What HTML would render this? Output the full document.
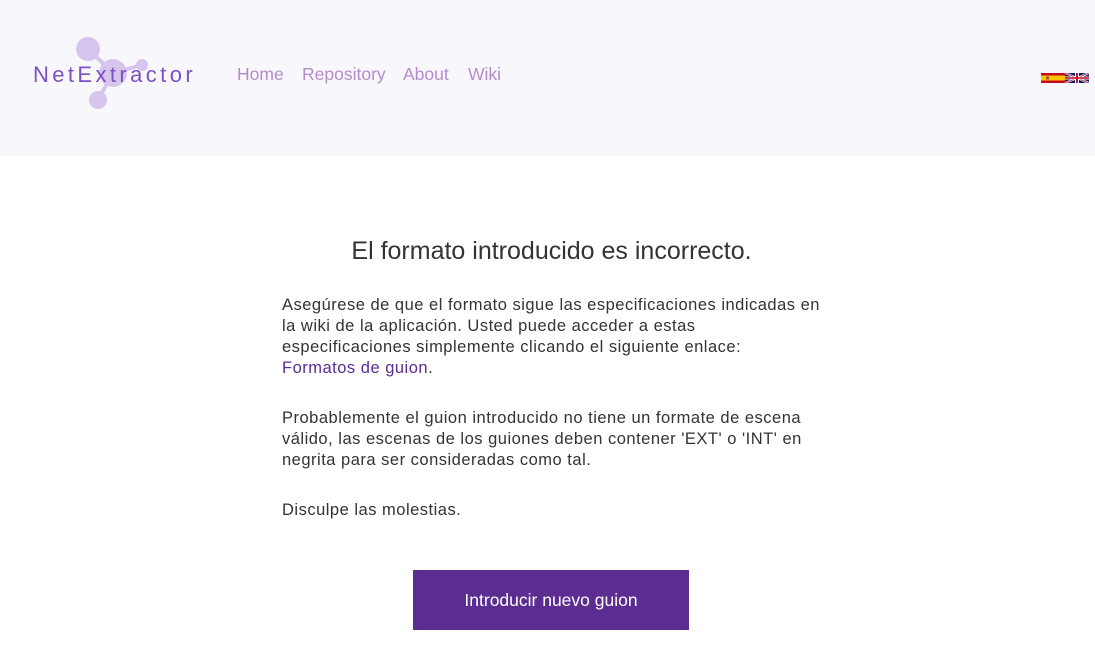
<!DOCTYPE html>
<html><head><meta charset="utf-8"><style>
body{margin:0;width:1095px;height:645px;background:#fff;font-family:"Liberation Sans",sans-serif;overflow:hidden;position:relative}
.hdr{position:absolute;left:0;top:0;width:1095px;height:156px;background:#f8f7fc}
.nav{position:absolute;top:64px;font-size:17.5px;color:#b48ccc}
h1{position:absolute;left:0;width:1103px;top:237px;margin:0;text-align:center;font-size:25px;font-weight:normal;color:#333}
.p{position:absolute;left:282px;width:600px;font-size:16.5px;letter-spacing:0.5px;line-height:21px;color:#333;white-space:nowrap}
a{color:#5b2d91;text-decoration:none}
.btn{position:absolute;left:413px;top:570px;width:276px;height:60px;background:#5b2d91;color:#fff;font-size:17.5px;text-align:center;line-height:60px}
</style></head><body>
<div class="hdr">
<svg width="220" height="130" style="position:absolute;left:0;top:0">
<g stroke="#d6c6ee" stroke-width="4"><line x1="88" y1="49" x2="113" y2="73"/><line x1="113" y1="73" x2="142" y2="65"/><line x1="113" y1="73" x2="98" y2="100"/></g>
<g fill="#d6c6ee"><circle cx="88" cy="49" r="12"/><circle cx="113" cy="73" r="14"/><circle cx="142" cy="65" r="6"/><circle cx="98" cy="100" r="9"/></g>
<text x="33" y="82" font-family="Liberation Sans, sans-serif" font-size="22" letter-spacing="3.4" fill="#7a52c2">NetExtractor</text>
</svg>
<span class="nav" style="left:237px">Home</span>
<span class="nav" style="left:302px">Repository</span>
<span class="nav" style="left:403px">About</span>
<span class="nav" style="left:468px">Wiki</span>
<svg width="48" height="10" style="position:absolute;left:1041px;top:73px">
<rect width="24" height="10" fill="#c60b1e"/><rect y="2.5" width="24" height="5" fill="#ffc400"/><rect x="5" y="3.5" width="3" height="3" fill="#a0522d"/>
<rect x="24" width="24" height="10" fill="#012169"/>
<path d="M24 0L48 10M48 0L24 10" stroke="#fff" stroke-width="2"/>
<path d="M24 0L48 10M48 0L24 10" stroke="#c8102e" stroke-width="0.8"/>
<rect x="34" width="4" height="10" fill="#fff"/><rect x="24" y="3.5" width="24" height="3" fill="#fff"/>
<rect x="35" width="2" height="10" fill="#c8102e"/><rect x="24" y="4.2" width="24" height="1.6" fill="#c8102e"/>
</svg>
</div>
<h1>El formato introducido es incorrecto.</h1>
<div class="p" style="top:295px">Asegúrese de que el formato sigue las especificaciones indicadas en<br>la wiki de la aplicación. Usted puede acceder a estas<br>especificaciones simplemente clicando el siguiente enlace:<br><a>Formatos de guion</a>.</div>
<div class="p" style="top:408px">Probablemente el guion introducido no tiene un formate de escena<br>válido, las escenas de los guiones deben contener 'EXT' o 'INT' en<br>negrita para ser consideradas como tal.</div>
<div class="p" style="top:500px">Disculpe las molestias.</div>
<div class="btn">Introducir nuevo guion</div>
</body></html>
